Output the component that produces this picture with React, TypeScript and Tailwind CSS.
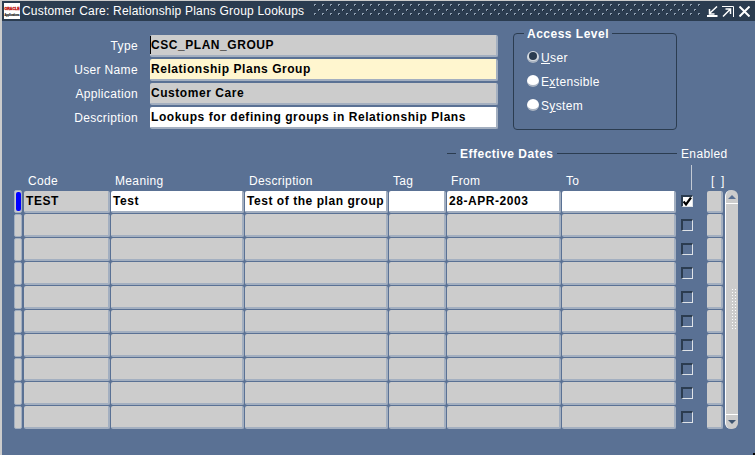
const FONT = "font-['Liberation_Sans',Arial,sans-serif]"

const FORM_FIELDS = [
  { label: 'Type', value: 'CSC_PLAN_GROUP', bg: 'bg-[#cccccc]', caret: true },
  { label: 'User Name', value: 'Relationship Plans Group', bg: 'bg-[#fff6cf]', caret: false },
  { label: 'Application', value: 'Customer Care', bg: 'bg-[#cccccc]', caret: false },
  { label: 'Description', value: 'Lookups for defining groups in Relationship Plans', bg: 'bg-white', caret: false },
]

const COLUMNS = [
  { label: 'Code', width: 'w-[87px]' },
  { label: 'Meaning', width: 'w-[134px]' },
  { label: 'Description', width: 'w-[144px]' },
  { label: 'Tag', width: 'w-[58px]' },
  { label: 'From', width: 'w-[115px]' },
  { label: 'To', width: 'w-[115px]' },
]

const ROW_COUNT = 10

function Cell({ width, value, white, first }: { width: string; value?: string; white?: boolean; first: boolean }) {
  return (
    <div
      className={`${width} ${first ? 'h-[22px] mt-[1px]' : 'h-[23px]'} mr-[1px] shrink-0 pl-[2px] rounded-[2px] border-r-2 border-b-2 border-[#a3afc0] text-[12px] leading-[20px] font-bold tracking-[0.55px] text-black whitespace-nowrap overflow-hidden ${white ? 'bg-white' : 'bg-[#cccccc]'}`}
    >
      {value}
    </div>
  )
}

function Radio({ label, hot, selected }: { label: string; hot: number; selected?: boolean }) {
  return (
    <div className="flex items-center h-[24px] text-[12px] tracking-[0.35px] text-white">
      <span className={`w-[12px] h-[12px] mb-[2px] rounded-full border-b-2 border-[#aab4c2] flex items-center justify-center ${selected ? 'bg-[#d5dae0]' : 'bg-white'}`}>
        {selected && <span className="w-[8px] h-[8px] rounded-full bg-[#2b3c50]" />}
      </span>
      <span className="ml-[2px]">
        {label.slice(0, hot)}
        <span className="underline">{label[hot]}</span>
        {label.slice(hot + 1)}
      </span>
    </div>
  )
}

function TitleButtons() {
  return (
    <div className="flex items-center shrink-0 mr-[5px]">
      <svg width="11" height="11" viewBox="0 0 11 11" fill="none" stroke="white">
        <path d="M0 10h10.500" strokeWidth="2" />
        <path d="M10 0.500 3 7M2.500 3v5h5" strokeWidth="1.500" />
      </svg>
      <svg width="12" height="11" viewBox="0 0 12 11" fill="none" stroke="white" className="ml-[4px]">
        <path d="M0 0.500h11.500V11" strokeWidth="1" />
        <path d="M1 10.500 8 3.500M3.500 3h5v5" strokeWidth="1.500" />
      </svg>
      <svg width="11" height="11" viewBox="0 0 11 11" fill="none" stroke="white" strokeWidth="2" className="ml-[5px]">
        <path d="m0.500 0.500 10 10M10.500 0.500l-10 10" />
      </svg>
    </div>
  )
}

function Logo() {
  return (
    <svg width="16" height="16" viewBox="0 0 16 16" className="shrink-0 ml-[2px] mr-[2px]">
      <rect width="16" height="16" fill="white" />
      <text x="0.500" y="7" fontSize="3.800" fontWeight="700" fill="#c02018" stroke="#c02018" strokeWidth="0.400" textLength="15" lengthAdjust="spacingAndGlyphs" fontFamily="Liberation Sans">ORACLE</text>
      <text x="0.500" y="12.500" fontSize="2.800" fontWeight="700" fill="#222222" stroke="#222222" strokeWidth="0.200" textLength="15" lengthAdjust="spacingAndGlyphs" fontFamily="Liberation Sans">Applications</text>
    </svg>
  )
}

function TitlePattern() {
  return (
    <svg className="flex-1 h-[14px] ml-[10px] mr-[5px]" aria-hidden="true">
      <defs>
        <pattern id="grip" width="8" height="9" patternUnits="userSpaceOnUse">
          <rect x="0" y="0" width="2" height="2" fill="#8fa0b3" />
          <rect x="1" y="1" width="1" height="1" fill="#16202c" />
          <rect x="4" y="5" width="2" height="2" fill="#8fa0b3" />
          <rect x="5" y="6" width="1" height="1" fill="#16202c" />
        </pattern>
      </defs>
      <rect width="100%" height="100%" fill="url(#grip)" />
    </svg>
  )
}

function Row({ index }: { index: number }) {
  const first = index === 0
  return (
    <div className="flex h-[24px]">
      <div className="w-[8px] h-[23px] mr-[2px] shrink-0 rounded-[2px] bg-[#cccccc] border border-[#a3afc0] flex justify-center">
        {first && <div className="w-[5px] h-[19px] mt-[1px] rounded-[2px] bg-[#0000ff]" />}
      </div>
      <Cell first={first} width="w-[86px]" value={first ? 'TEST' : undefined} />
      <Cell first={first} width="w-[133px]" value={first ? 'Test' : undefined} white={first} />
      <Cell first={first} width="w-[143px]" value={first ? 'Test of the plan group' : undefined} white={first} />
      <Cell first={first} width="w-[57px]" white={first} />
      <Cell first={first} width="w-[114px]" value={first ? '28-APR-2003' : undefined} white={first} />
      <Cell first={first} width="w-[114px]" white={first} />
      <div className="w-[30px] shrink-0 pl-[4px] pt-[5px]">
        <div className={`w-[12px] h-[12px] border-t-2 border-l-2 border-t-[#2b3c50] border-l-[#2b3c50] border-r border-b border-r-[#dfe3e8] border-b-[#dfe3e8] ${first ? 'bg-white' : ''}`}>
          {first && (
            <svg width="9" height="9" viewBox="0 0 9 9" fill="none" stroke="black" strokeWidth="2.200">
              <path d="m0.500 4.500 2.500 3 5-7" />
            </svg>
          )}
        </div>
      </div>
      <div className={`w-[16px] ${first ? 'h-[22px] mt-[1px]' : 'h-[23px]'} shrink-0 rounded-[2px] bg-[#cccccc] border-r-2 border-b-2 border-[#a3afc0]`} />
    </div>
  )
}

function Scrollbar() {
  return (
    <div className="w-[13px] h-[239px] ml-[2px] rounded-t-[6px] rounded-b-[6px] bg-[#cccccc] border-l border-white flex flex-col">
      <div className="h-[14px] shrink-0 border-b border-white flex items-center justify-center">
        <div className="w-0 h-0 border-x-[4px] border-x-transparent border-b-[4px] border-b-[#5a7194]" />
      </div>
      <div className="flex-1 flex items-center justify-end">
        <div className="w-[7px] h-[42px] bg-[radial-gradient(#ffffff_0.9px,transparent_1px)] bg-[length:3px_3px]" />
      </div>
      <div className="h-[15px] shrink-0 border-t border-white flex items-center justify-center">
        <div className="w-0 h-0 border-x-[4px] border-x-transparent border-t-[4px] border-t-[#3f5570]" />
      </div>
    </div>
  )
}

export default function App() {
  return (
    <div className={`${FONT} relative w-[755px] h-[455px] flex flex-col bg-[#5a7194] border-l-2 border-t border-[#cccccc] overflow-hidden`}>
      <div className="h-[20px] shrink-0 flex items-center bg-[#2b3c50] text-white">
        <Logo />
        <span className="text-[12px] tracking-[0.2px] whitespace-nowrap">Customer Care: Relationship Plans Group Lookups</span>
        <TitlePattern />
        <TitleButtons />
      </div>

      <div className="flex pt-[14px] h-[110px] shrink-0">
        <div className="flex flex-col w-[496px] shrink-0">
          {FORM_FIELDS.map(field => (
            <div key={field.label} className="flex h-[24px] shrink-0 items-start">
              <div className="w-[136px] shrink-0 pt-[2px] text-right text-[12px] tracking-[0.35px] text-white">{field.label}</div>
              <div
                className={`relative w-[348px] h-[22px] ml-[12px] pl-[1px] rounded-[2px] border-r-2 border-b-2 border-[#a3afc0] text-[12px] leading-[20px] font-bold tracking-[0.55px] text-black whitespace-nowrap ${field.bg}`}
              >
                {field.caret && <span className="absolute left-0 top-[1px] w-[1px] h-[18px] bg-black" />}
                {field.value}
              </div>
            </div>
          ))}
        </div>
        <div className="relative w-[164px] h-[97px] ml-[15px] mt-[-2px] rounded-[4px] border border-[#2b3c50] pl-[13px] pt-[12px]">
          <div className="absolute left-[10px] top-[-7px] px-[3px] bg-[#5a7194] text-[12px] leading-[15px] font-bold tracking-[0.5px] text-white">Access Level</div>
          <Radio label="User" hot={0} selected />
          <Radio label="Extensible" hot={1} />
          <Radio label="System" hot={1} />
        </div>
      </div>

      <div className="h-[15px] mt-[15px] flex shrink-0 items-center">
        <div className="w-[445px] shrink-0" />
        <div className="w-[9px] h-[1px] bg-[#2b3c50]" />
        <div className="w-[101px] px-[4px] text-[12px] font-bold tracking-[0.5px] text-white whitespace-nowrap">Effective Dates</div>
        <div className="w-[120px] h-[1px] bg-[#2b3c50]" />
        <div className="pl-[4px] text-[12px] tracking-[0.35px] text-white">Enabled</div>
      </div>

      <div className="flex pl-[12px] h-[19px] mt-[10px] shrink-0 items-end">
        <div className="w-[10px] shrink-0" />
        {COLUMNS.map(col => (
          <div key={col.label} className={`${col.width} pl-[4px] mb-[1px] shrink-0 text-[12px] leading-[16px] tracking-[0.35px] text-white`}>{col.label}</div>
        ))}
        <div className="w-[30px] h-[25px] shrink-0 pl-[14px]">
          <div className="w-[1px] h-full bg-[#c3cad4]" />
        </div>
        <div className="w-[20px] shrink-0 pl-[4px] mb-[1px] text-[12px] leading-[16px] text-white whitespace-pre">{'[  ]'}</div>
      </div>

      <div className="flex pl-[12px]">
        <div>
          {Array.from({ length: ROW_COUNT }).map((_, i) => (
            <Row key={i} index={i} />
          ))}
        </div>
        <Scrollbar />
      </div>

      <div className="absolute right-0 bottom-0 w-[2px] h-[2px] bg-black" />
    </div>
  )
}
